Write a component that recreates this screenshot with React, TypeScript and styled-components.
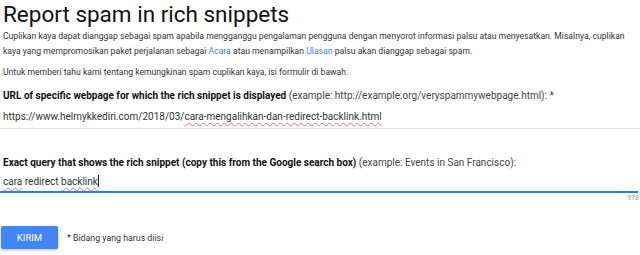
import React from "react";
import styled, { createGlobalStyle } from "styled-components";

const GlobalStyle = createGlobalStyle`
  html, body {
    margin: 0;
    padding: 0;
    background: #fff;
    font-family: Roboto, "Liberation Sans", Arial, sans-serif;
    overflow: hidden;
  }
`;

const Page = styled.div`
  width: 640px;
  height: 255px;
  padding: 0 0 0 3px;
  box-sizing: border-box;
  display: flex;
  flex-flow: column nowrap;
`;

const Title = styled.h1`
  margin: 0;
  font-size: 22.5px;
  font-weight: 400;
  line-height: 28px;
  color: #111;
`;

const Intro = styled.p<{ $top: number }>`
  margin: ${({ $top }) => $top}px 0 0;
  max-width: 628px;
  font-size: 8.65px;
  line-height: 15px;
  color: #333;
`;

const Link = styled.a`
  color: #4285f4;
  text-decoration: none;
`;

const Field = styled.div<{ $top: number }>`
  margin-top: ${({ $top }) => $top}px;
  display: flex;
  flex-flow: column nowrap;
`;

const Label = styled.div`
  font-size: 10px;
  line-height: 14px;
  color: #222;
  white-space: nowrap;

  b {
    font-weight: 700;
    color: #111;
  }
`;

const Hint = styled.span`
  color: #444;
`;

const Input = styled.div<{ $active?: boolean }>`
  margin-top: ${({ $active }) => ($active ? "5px" : "7px")};
  font-size: 10px;
  line-height: 14px;
  color: #333;
  padding-bottom: ${({ $active }) => ($active ? "2px" : "4px")};
  border-bottom: ${({ $active }) =>
    $active ? "2px solid #1a7ff0" : "1px solid #e2e2e2"};
  margin-right: ${({ $active }) => ($active ? "2px" : "0")};
  margin-left: -3px;
  padding-left: 3px;
`;

const Squiggle = styled.span`
  text-decoration: underline wavy #e57373;
  text-decoration-thickness: 1px;
  text-underline-offset: 2px;
`;

const Caret = styled.span`
  display: inline-block;
  width: 1px;
  height: 12px;
  background: #222;
  vertical-align: -2px;
`;

const Counter = styled.div`
  align-self: flex-end;
  font-size: 7px;
  line-height: 8px;
  color: #999;
  margin-top: 1px;
  margin-right: 1px;
`;

const Actions = styled.div`
  margin-top: 24px;
  display: flex;
  align-items: center;
  gap: 9px;
`;

const Button = styled.button`
  width: 57px;
  height: 23px;
  margin-left: -2px;
  border: none;
  border-radius: 2px;
  background: #4285f4;
  color: #fff;
  font-family: inherit;
  font-size: 9.5px;
  font-weight: 400;
  box-shadow: 0 1px 3px rgba(0, 0, 0, 0.3);
  padding: 0;
`;

const Note = styled.span`
  font-size: 8.8px;
  color: #333;
`;

export default function App() {
  return (
    <>
      <GlobalStyle />
      <Page>
        <Title>Report spam in rich snippets</Title>
        <Intro $top={1}>
          Cuplikan kaya dapat dianggap sebagai spam apabila mengganggu pengalaman
          pengguna dengan menyorot informasi palsu atau menyesatkan. Misalnya,
          cuplikan kaya yang mempromosikan paket perjalanan sebagai{" "}
          <Link>Acara</Link> atau menampilkan <Link>Ulasan</Link> palsu akan
          dianggap sebagai spam.
        </Intro>
        <Intro $top={6}>
          Untuk memberi tahu kami tentang kemungkinan spam cuplikan kaya, isi
          formulir di bawah.
        </Intro>
        <Field $top={9}>
          <Label>
            <b>URL of specific webpage for which the rich snippet is displayed</b>{" "}
            <Hint>(example: http://example.org/veryspammywebpage.html): *</Hint>
          </Label>
          <Input>
            https://www.helmykkediri.com/2018/03/
            <Squiggle>cara-mengalihkan-dan-redirect-backlink.html</Squiggle>
          </Input>
        </Field>
        <Field $top={27}>
          <Label>
            <b>
              Exact query that shows the rich snippet (copy this from the Google
              search box)
            </b>{" "}
            <Hint>(example: Events in San Francisco):</Hint>
          </Label>
          <Input $active>
            <Squiggle>cara</Squiggle> redirect <Squiggle>backlink</Squiggle>
            <Caret />
          </Input>
          <Counter>978</Counter>
        </Field>
        <Actions>
          <Button>KIRIM</Button>
          <Note>* Bidang yang harus diisi</Note>
        </Actions>
      </Page>
    </>
  );
}
